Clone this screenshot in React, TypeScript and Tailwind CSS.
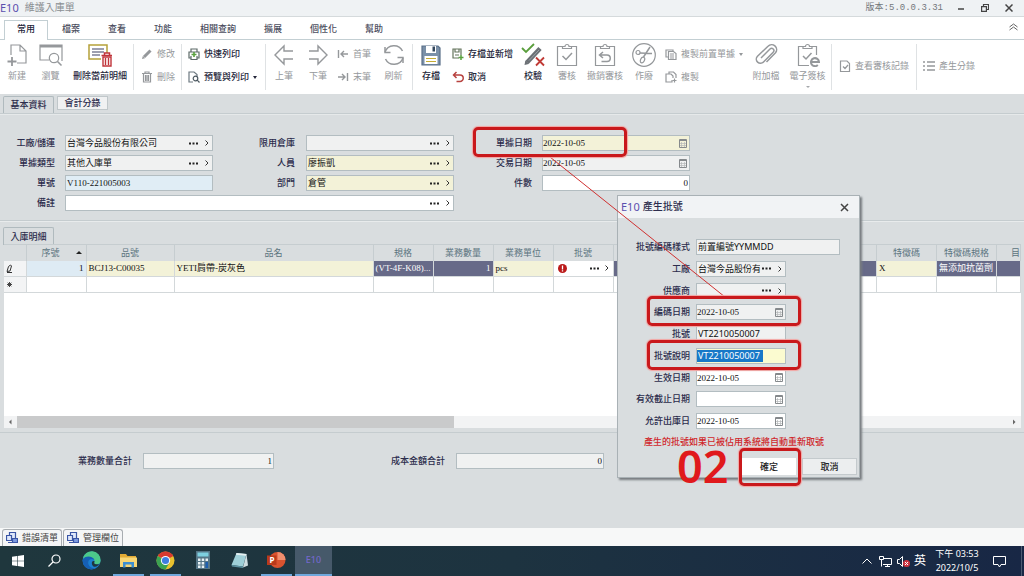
import type { ReactNode } from "react";
import clsx from "clsx";

const sans = "font-['Noto_Sans','Noto_Sans_CJK_TC',sans-serif]";
const serif = "font-['Liberation_Serif','Noto_Sans_CJK_TC',serif]";

const menus = ["檔案", "查看", "功能", "相關查詢", "擴展", "個性化", "幫助"];

/* ---------- icons ---------- */

function Svg({ size = 24, children }: { size?: number; children: ReactNode }) {
  return (
    <svg
      width={size}
      height={size}
      viewBox={`0 0 ${size} ${size}`}
      fill="none"
      stroke="currentColor"
      strokeWidth="1.2"
      className="shrink-0"
      aria-hidden="true"
    >
      {children}
    </svg>
  );
}

const NewIcon = () => (
  <Svg>
    <path d="M6 12V2h9l6 6v12h-9M15 2v6h6" />
    <path d="M7 14v9M2.500 18.500h9" strokeWidth="1.800" />
  </Svg>
);

const BrowseIcon = () => (
  <Svg>
    <path d="M10 17H1V2h22v16M1 3h22" />
    <path d="M1 3.500h22" strokeWidth="2" />
    <circle cx="15" cy="15" r="4.700" />
    <path d="M18.500 18.500l4 4" strokeWidth="1.600" />
  </Svg>
);

const DeleteDetailIcon = () => (
  <Svg>
    <path d="M13 16H1V2h18v8" stroke="#b5a13a" strokeWidth="1.500" />
    <path d="M4 6h12M4 9h12M4 12h8" stroke="#3d4163" />
    <path d="M13.500 12.500h11M16.500 12v-2h5v2" stroke="#c0343a" strokeWidth="1.500" />
    <path d="M15 14h8v9h-8zM17.500 15v7M20.500 15v7" stroke="#c0343a" strokeWidth="1.400" />
  </Svg>
);

const ArrowLeftIcon = () => (
  <Svg>
    <path d="M21 8h-9V3L3 12l9 9v-5h9" strokeWidth="1.400" />
  </Svg>
);

const ArrowRightIcon = () => (
  <Svg>
    <path d="M3 8h9V3l9 9-9 9v-5H3" strokeWidth="1.400" />
  </Svg>
);

const RefreshIcon = () => (
  <Svg>
    <path d="M3 9a9.500 9.500 0 0 1 17.500-1M21 15a9.500 9.500 0 0 1-17.500 1" strokeWidth="1.500" />
    <path d="M3 4v5.500h5.500M21 20v-5.500h-5.500" strokeWidth="1.500" />
  </Svg>
);

const SaveIcon = () => (
  <Svg>
    <path d="M3 3h16l2 2v17H3z" fill="#7a90a8" stroke="#5b7089" />
    <path d="M7 3h10v7H7z" fill="#fff" stroke="none" />
    <path d="M13.500 3.500h2.500v5h-2.500z" fill="#33475c" stroke="none" />
    <path d="M5.500 13h13v8h-13z" fill="#fff" stroke="none" />
    <path d="M7 15.500h10M7 18.500h10" stroke="#c5ac33" />
  </Svg>
);

const VerifyIcon = () => (
  <Svg>
    <path d="M1 5l4 4 8-8" stroke="#5a9e3c" strokeWidth="1.800" />
    <path d="M6 19.500L19 5.500" stroke="#6b7075" strokeWidth="4.500" />
    <path d="M3.500 22l.8-4.500 3.500 3.500z" fill="#6b7075" stroke="none" />
    <path d="M8 17.500L18 7" stroke="#aab0b5" strokeWidth="0.800" />
    <path d="M15 14.500l8 8M23 14.500l-8 8" stroke="#c03a36" strokeWidth="1.800" />
  </Svg>
);

const Clipboard = () => (
  <>
    <path d="M8 3.500H2.500v19h19v-19H16" />
    <path d="M7.500 5.500v-2H10a2 2 0 0 1 4 0h2.500v2z" />
  </>
);

const AuditIcon = () => (
  <Svg>
    <Clipboard />
    <path d="M7.500 13l3.500 3.500 6-6.500" strokeWidth="1.500" />
  </Svg>
);

const UnauditIcon = () => (
  <Svg>
    <Clipboard />
    <path d="M10 9l-3.500 3 3.500 3M6.500 12H14a3 3 0 0 1 0 6.500H8.500" strokeWidth="1.500" />
  </Svg>
);

const VoidIcon = () => (
  <Svg>
    <circle cx="12" cy="12" r="11.300" />
    <path d="M18 4l-6.500 10M20 10.500L8 10" strokeWidth="1.500" />
    <circle cx="6" cy="9.500" r="2" />
    <ellipse cx="10.500" cy="17" rx="2" ry="3" transform="rotate(25 10.500 17)" />
  </Svg>
);

const ClipIcon = () => (
  <Svg>
    <path
      d="M7 15l9-9a2 2 0 0 1 3.200 3.200L9.500 19a4 4 0 0 1-6-5.800L14 3.200a5 5 0 0 1 7.500 6.600L12.500 19"
      strokeWidth="1.500"
    />
  </Svg>
);

const SignIcon = () => (
  <Svg>
    <path d="M13 22.500H2.500v-19H8M16 3.500h4.500V12" />
    <path d="M7 5.500v-2h2.500a2 2 0 0 1 4 0H16v2z" />
    <path d="M7 13l3 3 5.500-6" strokeWidth="1.500" />
    <path d="M15 19h8a4 4 0 1 0-1.200 3" strokeWidth="2" />
  </Svg>
);

const PencilIcon = () => (
  <Svg size={12}>
    <path d="M3 9l6.500-6.500" strokeWidth="3" />
    <path d="M1 11l.8-3 2.200 2.200z" fill="currentColor" stroke="none" />
  </Svg>
);

const TrashIcon = () => (
  <Svg size={12}>
    <path d="M1 2.500h10M4 2V1h4v1M2.500 3v8h7V3M4.500 4v6M6 4v6M7.500 4v6" />
  </Svg>
);

const QuickPrintIcon = () => (
  <Svg size={12}>
    <path d="M3 4V1h6v3M3 10H1V4h10v6H9M3 8v3.500h6V8" stroke="#5d6a68" />
    <path d="M6 4v5M3.500 6.500h5" stroke="#5aa23f" strokeWidth="1.600" />
  </Svg>
);

const PreviewIcon = () => (
  <Svg size={12}>
    <path d="M5 11H1V1h5l3 2.500V5" stroke="#6c7880" />
    <circle cx="7.500" cy="7.500" r="2.300" stroke="#4c5860" />
    <path d="M9.200 9.200l2.300 2.300" stroke="#4c5860" />
  </Svg>
);

const FirstIcon = () => (
  <Svg size={12}>
    <path d="M1.500 2v8M11 6H4M7 3L4 6l3 3" strokeWidth="1.400" />
  </Svg>
);

const LastIcon = () => (
  <Svg size={12}>
    <path d="M10.500 2v8M1 6h7M5 3l3 3-3 3" strokeWidth="1.400" />
  </Svg>
);

const SaveNewIcon = () => (
  <Svg size={12}>
    <path d="M7 10H1V1h8v6M3 1v3h4V1M3 7h4" stroke="#64745c" />
    <path d="M9 7v5M6.500 9.500h5" stroke="#5aa23f" strokeWidth="1.500" />
  </Svg>
);

const UndoIcon = () => (
  <Svg size={12}>
    <path d="M4.500 1L1.500 4l3 3M1.500 4H8a3 3 0 0 1 0 6.500H4.500" stroke="#b8423f" strokeWidth="1.500" />
  </Svg>
);

const CopyPrevIcon = () => (
  <Svg size={12}>
    <path d="M3 9H1V2h7v1" />
    <path d="M3.500 3.500h5l2.500 2v6H3.500zM5 6h4M5 8h4M5 10h4" />
  </Svg>
);

const CopyIcon = () => (
  <Svg size={12}>
    <path d="M4 3V1h4.500L11 3.500V7M4 3H1v8h6V9M4 3h2l2 2v2" />
    <path d="M9.500 7.500v4M7.500 9.500h4" />
  </Svg>
);

const LogIcon = () => (
  <Svg size={12}>
    <path d="M1.500 1h6.500l2.500 2.500v8h-9zM4 6.500l2 2 3-3.500" />
  </Svg>
);

const ListIcon = () => (
  <Svg size={12}>
    <path d="M0 2h2M4 2h8M0 6h2M4 6h8M0 10h2M4 10h8" strokeWidth="1.400" />
  </Svg>
);

const Calendar = () => (
  <svg width="8" height="9" viewBox="0 0 8 9" fill="none" stroke="#85898c" aria-hidden="true">
    <path d="M.5 .5h7v8h-7zM.5 1.500h7" />
    <path d="M2.500 3v5M5.500 3v5M1 4.500h6M1 6.500h6" stroke="#b4b7b9" strokeWidth="0.700" />
  </svg>
);

/* ---------- ribbon ---------- */

function Big({
  icon,
  label,
  width,
  active,
  caret,
}: {
  icon: ReactNode;
  label: string;
  width: string;
  active?: boolean;
  caret?: boolean;
}) {
  return (
    <button
      className={clsx(
        "flex shrink-0 flex-col items-center whitespace-nowrap pt-[3px]",
        width,
        active ? "font-medium text-[#24263a]" : "text-[#95989b]",
      )}
    >
      {icon}
      <span className="mt-[3px] leading-3">{label}</span>
      {caret && <span className="mt-1 border-x-2 border-t-2 border-x-transparent border-t-[#a5a8ab]" />}
    </button>
  );
}

function Small({
  icon,
  label,
  active,
  caret,
}: {
  icon: ReactNode;
  label: string;
  active?: boolean;
  caret?: boolean;
}) {
  return (
    <button
      className={clsx(
        "flex items-center whitespace-nowrap leading-3",
        active ? "font-medium text-[#24263a]" : "text-[#95989b]",
      )}
    >
      {icon}
      <span className="ml-1">{label}</span>
      {caret && <span className="ml-1 border-x-2 border-t-[3px] border-x-transparent border-t-current" />}
    </button>
  );
}

const Stack = ({ width, children }: { width: string; children: ReactNode }) => (
  <div className={clsx("flex shrink-0 flex-col gap-[11px] pt-2", width)}>{children}</div>
);

const Sep = () => <div className="mt-1 h-[46px] w-px shrink-0 bg-[#dfe2e4]" />;

function Ribbon() {
  return (
    <div className="flex h-[54px] overflow-hidden bg-white text-[9px]">
      <Big icon={<NewIcon />} label="新建" width="w-[34px]" />
      <Big icon={<BrowseIcon />} label="瀏覽" width="w-[33px]" />
      <Big icon={<DeleteDetailIcon />} label="刪除當前明細" width="w-[66px]" active />
      <Sep />
      <Stack width="w-[47px] pl-[7px]">
        <Small icon={<PencilIcon />} label="修改" />
        <Small icon={<TrashIcon />} label="刪除" />
      </Stack>
      <Sep />
      <Stack width="w-[83px] pl-[6px]">
        <Small icon={<QuickPrintIcon />} label="快速列印" active />
        <Small icon={<PreviewIcon />} label="預覽與列印" active caret />
      </Stack>
      <Sep />
      <Big icon={<ArrowLeftIcon />} label="上筆" width="w-[36px]" />
      <Big icon={<ArrowRightIcon />} label="下筆" width="w-[32px]" />
      <Stack width="w-[41px] pl-[3px]">
        <Small icon={<FirstIcon />} label="首筆" />
        <Small icon={<LastIcon />} label="末筆" />
      </Stack>
      <Big icon={<RefreshIcon />} label="刷新" width="w-[37px]" />
      <Sep />
      <Big icon={<SaveIcon />} label="存檔" width="w-[36px]" active />
      <Stack width="w-[66px] pl-[3px]">
        <Small icon={<SaveNewIcon />} label="存檔並新增" active />
        <Small icon={<UndoIcon />} label="取消" active />
      </Stack>
      <Big icon={<VerifyIcon />} label="校驗" width="w-[36px]" active />
      <Big icon={<AuditIcon />} label="審核" width="w-[32px]" />
      <Big icon={<UnauditIcon />} label="撤銷審核" width="w-[44px]" />
      <Big icon={<VoidIcon />} label="作廢" width="w-[34px]" />
      <Stack width="w-[87px] pl-[4px]">
        <Small icon={<CopyPrevIcon />} label="複製前置單據" caret />
        <Small icon={<CopyIcon />} label="複製" />
      </Stack>
      <Big icon={<ClipIcon />} label="附加檔" width="w-[36px]" />
      <Big icon={<SignIcon />} label="電子簽核" width="w-[47px]" caret />
      <Sep />
      <div className="flex w-[84px] shrink-0 items-center pb-[2px] pl-[7px]">
        <Small icon={<LogIcon />} label="查看審核記錄" />
      </div>
      <Sep />
      <div className="flex items-center pb-[2px] pl-[6px]">
        <Small icon={<ListIcon />} label="產生分錄" />
      </div>
    </div>
  );
}

/* ---------- form fields ---------- */

const Dots = ({ className }: { className?: string }) => (
  <svg width="9" height="3" viewBox="0 0 9 3" fill="#222" className={className} aria-hidden="true">
    <path d="M0 .5h2v2H0zM3.500 .5h2v2h-2zM7 .5h2v2H7z" />
  </svg>
);

const Chevron = ({ className }: { className?: string }) => (
  <svg width="4" height="6" viewBox="0 0 4 6" fill="none" stroke="#333" className={className} aria-hidden="true">
    <path d="M.5 .5L3 3 .5 5.500" />
  </svg>
);

function Field({
  id,
  label,
  value = "",
  bg = "bg-[#f0f1f1]",
  width = "w-[148px]",
  labelWidth = "w-[55px]",
  kind = "text",
  right,
  font = serif,
  selected,
}: {
  id: string;
  label: string;
  value?: string;
  bg?: string;
  width?: string;
  labelWidth?: string;
  kind?: "text" | "lookup" | "date";
  right?: boolean;
  font?: string;
  selected?: boolean;
}) {
  return (
    <div className="flex items-center">
      <label
        htmlFor={id}
        className={clsx("shrink-0 whitespace-nowrap text-right font-medium leading-4 text-[#2c2c4c]", labelWidth)}
      >
        {label}
      </label>
      <div className={clsx("flex h-4 shrink-0 items-center border border-[#b3bdc1]", bg, width)}>
        <input
          id={id}
          defaultValue={value}
          className={clsx(
            "h-3 min-w-0 leading-3 text-[#111] outline-none",
            font,
            kind === "date" ? "pl-0" : "px-px",
            selected ? "w-[66px] bg-[#1778c8] text-white" : "flex-1 bg-transparent",
            right && "text-right",
          )}
        />
        {kind === "lookup" && (
          <button className="flex items-center gap-[7px] pl-px pr-[3px]" aria-label={`${label} 選擇`}>
            <Dots />
            <Chevron />
          </button>
        )}
        {kind === "date" && (
          <button className="pr-[2px]" aria-label={`${label} 日曆`}>
            <Calendar />
          </button>
        )}
      </div>
    </div>
  );
}

const leftLabel = "w-[65px] pr-[10px]";
const midLabel = "w-[93px] pr-[11px]";
const rightLabel = "w-[88px] pr-[10px]";
const cream = "bg-[#f3f2d8]";

function HeaderForm() {
  return (
    <div className="flex flex-col gap-1 border-y border-[#c5cccf] pt-[21px] pb-[9px] shadow-[inset_0_1px_0_#e6e9ea]">
      <div className="flex">
        <div className="flex flex-col gap-1">
          <Field id="plant" label="工廠/儲運" value="台灣今品股份有限公司" kind="lookup" labelWidth={leftLabel} />
          <Field id="doctype" label="單據類型" value="其他入庫單" kind="lookup" labelWidth={leftLabel} />
          <Field id="docno" label="單號" value="V110-221005003" bg="bg-[#e0edf5]" labelWidth={leftLabel} />
        </div>
        <div className="flex flex-col gap-1">
          <Field id="warehouse" label="限用倉庫" kind="lookup" labelWidth={midLabel} />
          <Field id="person" label="人員" value="廖振凱" kind="lookup" bg={cream} labelWidth={midLabel} />
          <Field id="dept" label="部門" value="倉管" kind="lookup" bg={cream} labelWidth={midLabel} />
        </div>
        <div className="flex flex-col gap-1">
          <Field id="docdate" label="單據日期" value="2022-10-05" kind="date" bg={cream} labelWidth={rightLabel} />
          <Field id="trandate" label="交易日期" value="2022-10-05" kind="date" labelWidth={rightLabel} />
          <Field id="pieces" label="件數" value="0" right bg="bg-white" labelWidth={rightLabel} />
        </div>
      </div>
      <Field id="remark" label="備註" kind="lookup" bg="bg-white" width="w-[389px]" labelWidth={leftLabel} />
    </div>
  );
}

/* ---------- detail grid ---------- */

const columns = [
  { name: "", w: "w-[22px]" },
  { name: "序號", w: "w-[60px]", sort: true },
  { name: "品號", w: "w-[88px]" },
  { name: "品名", w: "w-[199px]" },
  { name: "規格", w: "w-[60px]" },
  { name: "業務數量", w: "w-[60px]" },
  { name: "業務單位", w: "w-[60px]" },
  { name: "批號", w: "w-[60px]" },
  { name: "", w: "" },
  { name: "特徵碼", w: "w-[60px]" },
  { name: "特徵碼規格", w: "w-[60px]" },
  { name: "目", w: "w-[24px]", edge: true },
];

const cell = "border-r border-b border-[#d3d8da] px-[2px]";
const dark = "bg-[#676a88] text-white";

function DetailGrid() {
  return (
    <div className="mr-[3px] ml-1 flex h-[184px] flex-col bg-white">
      <table className={clsx("w-full table-fixed border-collapse leading-[14px] text-[#111]", serif)}>
        <thead>
          <tr className="h-4 bg-[#d9dddf] text-[#5b7480]">
            {columns.map((c, i) => (
              <th
                key={i}
                className={clsx(
                  "overflow-hidden border-r border-t border-[#c6cdd0] font-normal whitespace-nowrap",
                  c.w,
                  c.edge && "text-right",
                )}
              >
                {c.sort ? (
                  <span className="flex items-center justify-end gap-4 pr-1">
                    {c.name}
                    <span className="border-x-[3px] border-b-[3px] border-x-transparent border-b-[#222]" />
                  </span>
                ) : (
                  c.name
                )}
              </th>
            ))}
          </tr>
        </thead>
        <tbody>
          <tr className="h-4 whitespace-nowrap">
            <td className={clsx(cell, "bg-[#f3f4f5]")}>
              <svg width="7" height="9" viewBox="0 0 7 9" fill="none" stroke="#333" aria-hidden="true">
                <path d="M1 7.500l1.500-5 2-1.500 1 1-1.500 5zM1 8.500h5" />
              </svg>
            </td>
            <td className={clsx(cell, "bg-[#deebf4] text-right")}>1</td>
            <td className={clsx(cell, cream)}>BCJ13-C00035</td>
            <td className={clsx(cell, cream)}>YETI肩帶-炭灰色</td>
            <td className={clsx(cell, dark)}>(VT-4F-K08)...</td>
            <td className={clsx(cell, dark, "text-right")}>1</td>
            <td className={clsx(cell, cream)}>pcs</td>
            <td className={cell}>
              <div className="flex items-center pl-[2px] pr-[2px]">
                <svg width="9" height="9" viewBox="0 0 9 9" aria-hidden="true">
                  <circle cx="4.500" cy="4.500" r="4.500" fill="#bb1a1a" />
                  <path d="M4.500 1.500v4M4.500 6.300v1.200" stroke="#fff" strokeWidth="1.300" />
                </svg>
                <Dots className="ml-auto" />
                <Chevron className="ml-[6px]" />
              </div>
            </td>
            <td className={clsx(cell, dark)} />
            <td className={clsx(cell, cream)}>X</td>
            <td className={clsx(cell, dark)}>無添加抗菌劑</td>
            <td className={clsx(cell, dark)} />
          </tr>
          <tr className="h-4">
            <td className={clsx(cell, "bg-[#f3f4f5]")}>
              <svg width="7" height="7" viewBox="0 0 7 7" stroke="#444" aria-hidden="true">
                <path d="M3.500 1v5M1 3.500h5M1.700 1.700l3.600 3.600M5.300 1.700L1.700 5.300" />
              </svg>
            </td>
            {columns.slice(1).map((_, i) => (
              <td key={i} className={cell} />
            ))}
          </tr>
        </tbody>
      </table>
      <div className="mt-auto flex h-3 items-center bg-[#f2f3f4]">
        <svg width="13" height="12" viewBox="0 0 13 12" fill="#666" aria-hidden="true">
          <path d="M7.500 3.500v5L5 6z" />
        </svg>
        <div className="h-full w-[43%] bg-[#c9cacb]" />
        <svg width="13" height="12" viewBox="0 0 13 12" fill="#666" className="ml-auto" aria-hidden="true">
          <path d="M5 3.500v5L7.500 6z" />
        </svg>
      </div>
    </div>
  );
}

/* ---------- lot number dialog ---------- */

function LotDialog() {
  const lw = "w-[78px] pr-[6px]";
  const w = "w-[90px]";
  return (
    <div
      role="dialog"
      aria-label="產生批號"
      className="absolute left-[617px] top-[195px] flex h-[283px] w-[243px] flex-col border border-[#a9b1b5] bg-[#d9dddf] shadow-[2px_2px_2px_#777c80]"
    >
      <div className="flex h-[22px] shrink-0 items-center bg-[#f1f3f5] pl-[3px] pr-[10px]">
        <span className={clsx("text-[11px] text-[#5a4fae]", sans)}>E10</span>
        <span className="ml-[3px] text-[10px] font-medium leading-4 text-[#2c2c4c]">產生批號</span>
        <button className="ml-auto" aria-label="關閉">
          <svg width="9" height="9" viewBox="0 0 9 9" stroke="#444" strokeWidth="1.500" aria-hidden="true">
            <path d="M1 1l7 7M8 1L1 8" />
          </svg>
        </button>
      </div>
      <div className="mt-[21px] flex h-[190px] shrink-0 flex-col justify-between">
        <Field id="pattern" label="批號編碼樣式" value="前置編號YYMMDD" width="w-[144px]" labelWidth={lw} font={sans} />
        <Field id="lotplant" label="工廠" value="台灣今品股份有" kind="lookup" width={w} labelWidth={lw} />
        <Field id="vendor" label="供應商" kind="lookup" width={w} labelWidth={lw} />
        <Field id="codedate" label="編碼日期" value="2022-10-05" kind="date" width={w} labelWidth={lw} />
        <Field id="lot" label="批號" value="VT2210050007" width={w} labelWidth={lw} font={sans} />
        <Field id="lotdesc" label="批號說明" value="VT2210050007" bg="bg-[#fbfbd0]" width={w} labelWidth={lw} font={sans} selected />
        <Field id="effective" label="生效日期" value="2022-10-05" kind="date" bg="bg-white" width={w} labelWidth={lw} />
        <Field id="expiry" label="有效截止日期" kind="date" bg="bg-white" width={w} labelWidth={lw} />
        <Field id="outdate" label="允許出庫日" value="2022-10-05" kind="date" bg="bg-white" width={w} labelWidth={lw} />
      </div>
      <p className="mt-[7px] pl-[26px] font-medium leading-3 whitespace-nowrap text-[#d0282c]">
        產生的批號如果已被佔用系統將自動重新取號
      </p>
      <div className="mt-auto flex justify-end gap-[6px] pr-[2px] pb-[2px]">
        <button className="h-[17px] w-[54px] bg-white font-medium text-[#222]">確定</button>
        <button className="h-[17px] w-[55px] border border-[#c4cacd] bg-[#eceeef] font-medium text-[#222]">取消</button>
      </div>
    </div>
  );
}

const mark = "absolute rounded-[5px] border-[3px] border-[#c9191c] shadow-[0_0_1px_1px_#f3a3a1]";

function Annotations() {
  return (
    <div className="pointer-events-none">
      <svg className="absolute left-[550px] top-[157px]" width="175" height="140" viewBox="0 0 175 140" aria-hidden="true">
        <path d="M0 0l175 140" stroke="#cf3030" />
      </svg>
      <div className={clsx(mark, "left-[473px] top-[127px] h-[30px] w-[154px]")} />
      <div className={clsx(mark, "left-[647px] top-[296px] h-[30px] w-[154px]")} />
      <div className={clsx(mark, "left-[647px] top-[340px] h-[30px] w-[154px]")} />
      <div className={clsx(mark, "left-[739px] top-[448px] h-[38px] w-[62px]")} />
      <span className={clsx("absolute left-[677px] top-[450px] text-[45px] font-semibold leading-8 text-[#e0191c]", sans)}>
        02
      </span>
    </div>
  );
}

/* ---------- status tabs and taskbar ---------- */

const StatusTab = ({ label }: { label: string }) => (
  <button className="flex h-full items-center gap-1 rounded-t-[3px] border border-b-0 border-[#a8adb1] bg-[#f4f5f6] px-[3px] text-[#444]">
    <svg width="12" height="12" viewBox="0 0 12 12" fill="#dfe8fa" stroke="#3a55a5" strokeWidth="1.200" aria-hidden="true">
      <path d="M3.500 .5h6v6h-6z" />
      <path d="M.5 3.500h5v5h-5zM2 10.500h4" />
      <path d="M6.500 6.500h5v4h-5z" fill="#7d9be0" />
    </svg>
    {label}
  </button>
);

function TaskButton({ label, open, active, children }: { label: string; open?: boolean; active?: boolean; children: ReactNode }) {
  return (
    <button
      aria-label={label}
      className={clsx("flex h-full w-[37px] shrink-0 flex-col items-center", active && "bg-[#46596a]")}
    >
      <span className="flex flex-1 items-center">{children}</span>
      <span className={clsx("h-[2px]", active ? "w-full" : "w-[31px]", (open || active) && "bg-[#6fa8dc]")} />
    </button>
  );
}

function Taskbar() {
  return (
    <div className="flex h-[30px] items-center bg-linear-to-r from-[#1f373d] via-[#1d3340] to-[#182745] text-white">
      <button aria-label="開始" className="flex w-[36px] justify-center">
        <svg width="12" height="12" viewBox="0 0 12 12" fill="#fff" aria-hidden="true">
          <path d="M0 1.700l5-.7v4.700H0zM5.600 .9L12 0v5.700H5.600zM0 6.300h5V11l-5-.7zM5.600 6.300H12V12l-6.400-.9z" />
        </svg>
      </button>
      <TaskButton label="搜尋">
        <svg width="13" height="13" viewBox="0 0 13 13" fill="none" stroke="#fff" strokeWidth="1.200" aria-hidden="true">
          <circle cx="8" cy="5" r="4" />
          <path d="M5 8l-4.500 4.500" />
        </svg>
      </TaskButton>
      <TaskButton label="Edge">
        <svg width="19" height="19" viewBox="0 0 19 19" aria-hidden="true">
          <circle cx="9.500" cy="9.500" r="9" fill="#1b7fd0" />
          <path d="M1 8a8.700 8.700 0 0 1 17.500 2c0 3-3 4-5.500 3-1.500-.7-.5-1.500-.5-3C12.500 6.500 6 4 1 8z" fill="#4cc98a" />
          <path d="M1 8c3-4 10-3 11.500 1C9 6.500 5 9 6.500 13.500 7.500 16.500 11 18 14 17 7 20.500-.5 16 1 8z" fill="#1660b4" />
          <path d="M12.500 10c0 1.500-1 2.300.5 3 1.500.6 3.500.5 4.500-.5-1 2-3 3.500-5 3.200C9.500 15 8.500 9 12.500 10z" fill="#1f363e" />
        </svg>
      </TaskButton>
      <TaskButton label="檔案總管" open>
        <svg width="17" height="15" viewBox="0 0 17 15" aria-hidden="true">
          <path d="M0 1h6l1.500 2H16v11H0z" fill="#e2ab35" />
          <path d="M0 4.500h17V14H0z" fill="#f8d775" />
          <path d="M3 9h11v5.500h-2.500V11.500h-6v3H3z" fill="#3d8fd1" />
        </svg>
      </TaskButton>
      <TaskButton label="Chrome" open>
        <svg width="19" height="19" viewBox="0 0 19 19" aria-hidden="true">
          <circle cx="9.500" cy="9.500" r="9" fill="#e8c12e" />
          <path d="M9.500 9.500L1.700 5a9 9 0 0 1 15.600 0z" fill="#d8392f" />
          <path d="M1.700 5a9 9 0 0 0 7.800 13.500l3.900-6.800-3.900-2.200z" fill="#3ba252" />
          <circle cx="9.500" cy="9.500" r="4.600" fill="#fff" />
          <circle cx="9.500" cy="9.500" r="3.600" fill="#3f7de0" />
        </svg>
      </TaskButton>
      <TaskButton label="小算盤">
        <svg width="14" height="18" viewBox="0 0 14 18" aria-hidden="true">
          <path d="M0 0h14v18H0z" fill="#557687" />
          <path d="M1.500 1.500h11v4h-11z" fill="#7dd0e0" />
          <path d="M2 7.500h2.500V10H2zM5.700 7.500h2.500V10H5.700zM2 11h2.500v2.500H2zM5.700 11h2.500v2.500H5.700zM2 14.500h2.500V17H2zM5.700 14.500h2.500V17H5.700zM9.500 7.500H12V10H9.500z" fill="#e7f0f4" />
          <path d="M9.500 11H12v6H9.500z" fill="#1d5fae" />
        </svg>
      </TaskButton>
      <TaskButton label="記事本">
        <svg width="17" height="17" viewBox="0 0 17 17" aria-hidden="true">
          <path d="M5.500 1l10 1-3.500 12.500L.5 13z" fill="#9fcfd8" />
          <path d="M5.500 1l10 1-.5 1.700-10-1z" fill="#e5eff1" />
          <path d="M15.500 2L17 13.500l-5 2z" fill="#d0dee2" />
          <path d="M.5 13l11.500 1.500v1.500L1 14.500z" fill="#5d93a3" />
        </svg>
      </TaskButton>
      <TaskButton label="PowerPoint" open>
        <svg width="19" height="18" viewBox="0 0 19 18" aria-hidden="true">
          <circle cx="10.500" cy="9" r="8" fill="#d9532f" />
          <path d="M10.500 1a8 8 0 0 1 8 8h-8z" fill="#f08e6e" />
          <path d="M0 4.500h9.500V14H0z" fill="#b93a1b" />
          <text x="2.500" y="12" fontSize="8" fontWeight="700" fill="#fff" fontFamily="Noto Sans, sans-serif">
            P
          </text>
        </svg>
      </TaskButton>
      <TaskButton label="E10" active>
        <span className={clsx("text-[9px] font-medium text-[#7468cc]", sans)}>E10</span>
      </TaskButton>

      <div className="ml-auto flex items-center">
        <svg width="10" height="6" viewBox="0 0 10 6" fill="none" stroke="#fff" aria-hidden="true">
          <path d="M.5 5.500L5 1l4.500 4.500" />
        </svg>
        <svg width="13" height="11" viewBox="0 0 13 11" fill="none" stroke="#fff" className="ml-[7px]" aria-hidden="true">
          <path d="M4 2.500h8.500v6H4M6 10.500h5M8.500 8.500v2M.5 .5h4v3h-4zM2.500 3.500v7" />
        </svg>
        <svg width="13" height="11" viewBox="0 0 13 11" fill="none" stroke="#fff" className="ml-[5px]" aria-hidden="true">
          <path d="M.5 3.500h2l3-3v10l-3-3h-2z" />
          <circle cx="9.500" cy="7.500" r="3.500" fill="#cf3341" stroke="none" />
          <path d="M8 6l3 3M11 6L8 9" />
        </svg>
        <span className="ml-1 text-[12px] leading-4">英</span>
        <div className={clsx("ml-2 w-[46px] text-center text-[9px] leading-[14px] whitespace-nowrap", sans)}>
          <div>下午 03:53</div>
          <div>2022/10/5</div>
        </div>
        <button className="ml-[13px]" aria-label="通知">
          <svg width="13" height="13" viewBox="0 0 13 13" fill="none" stroke="#fff" aria-hidden="true">
            <path d="M.5 1.500h12v8H8l-1.500 2.500L5 9.500H.5z" />
          </svg>
        </button>
        <div className="ml-[15px] mr-[2px] h-[30px] w-px bg-[#4d5b72]" />
      </div>
    </div>
  );
}

/* ---------- page ---------- */

export default function App() {
  return (
    <div
      className={clsx(
        "relative flex min-h-screen w-full flex-col overflow-hidden bg-[#d9dddf] text-[9px] leading-3",
        "font-['Liberation_Sans','Noto_Sans_CJK_TC',sans-serif]",
      )}
    >
      <header className="flex h-[17px] items-center border-b border-[#d5dadc] bg-[#eff2f4]">
        <span className={clsx("text-[11px] leading-4 text-[#5a4fae]", sans)}>E10</span>
        <h1 className="ml-[6px] text-[10px] leading-4 text-[#8b8f93]">維護入庫單</h1>
        <span className="ml-auto font-['Liberation_Mono','Noto_Sans_CJK_TC',monospace] text-[9px] text-[#74787c]">
          版本:5.0.0.3.31
        </span>
        <div className="ml-[14px] mr-[11px] flex items-center gap-4 text-[#444]">
          <button aria-label="最小化">
            <Svg size={8}>
              <path d="M1 5h6" strokeWidth="1.500" />
            </Svg>
          </button>
          <button aria-label="還原">
            <Svg size={8}>
              <path d="M.6 2.600h4.800v4.800H.6zM2.500 2.500v-2h5v5h-2" />
            </Svg>
          </button>
          <button aria-label="關閉視窗">
            <Svg size={8}>
              <path d="M.5 .5l7 7M7.500 .5l-7 7" strokeWidth="1.500" />
            </Svg>
          </button>
        </div>
      </header>

      <nav className="flex h-[23px] items-end border-b border-[#c3cfd3] bg-white font-medium text-[#4c4e60]">
        <button className="-mb-px ml-1 h-5 w-11 border border-b-0 border-[#c3cfd3] bg-white pb-[3px] text-[#24263a]">
          常用
        </button>
        {menus.map((m) => (
          <button key={m} className="h-5 px-[14px] pb-px">
            {m}
          </button>
        ))}
        <button className="mb-2 ml-auto mr-[6px] text-[#666]" aria-label="收合功能區">
          <Svg size={9}>
            <path d="M.5 5l4-3 4 3M.5 8l4-3 4 3" strokeWidth="1" />
          </Svg>
        </button>
      </nav>

      <Ribbon />

      <main className="flex flex-1 flex-col">
        <div className="flex h-[19px] items-end pl-[3px] font-medium text-[#2c2c4c]">
          <button className="-mb-px h-[18px] w-[51px] rounded-t-[2px] border border-b-0 border-[#b0babe] bg-[#d9dddf] pb-[2px]">
            基本資料
          </button>
          <button className="mb-[3px] ml-[3px] h-[14px] w-[51px] border border-[#c0c7ca] bg-[#f0f1f2]">會計分錄</button>
        </div>
        <HeaderForm />

        <div className="flex h-[23px] items-end border-t border-[#e8ebec] pl-[3px] font-medium text-[#2c2c4c]">
          <button className="-mb-px h-[18px] w-[51px] rounded-t-[2px] border border-b-0 border-[#b0babe] bg-[#d9dddf]">
            入庫明細
          </button>
        </div>
        <DetailGrid />
        <div className="mt-1 flex flex-1 items-start border-t border-[#c5cccf] pt-5 pb-8">
          <Field id="qtysum" label="業務數量合計" value="1" right width="w-[131px]" labelWidth="w-[143px] pr-[11px]" />
          <Field id="costsum" label="成本金額合計" value="0" right labelWidth="w-[182px] pr-[11px]" />
        </div>
      </main>

      <footer>
        <div className="flex h-[18px] items-end gap-px bg-[#f7f8f8] pt-px pl-[2px]">
          <StatusTab label="錯誤清單" />
          <StatusTab label="管理欄位" />
        </div>
        <Taskbar />
      </footer>

      <LotDialog />
      <Annotations />
    </div>
  );
}
